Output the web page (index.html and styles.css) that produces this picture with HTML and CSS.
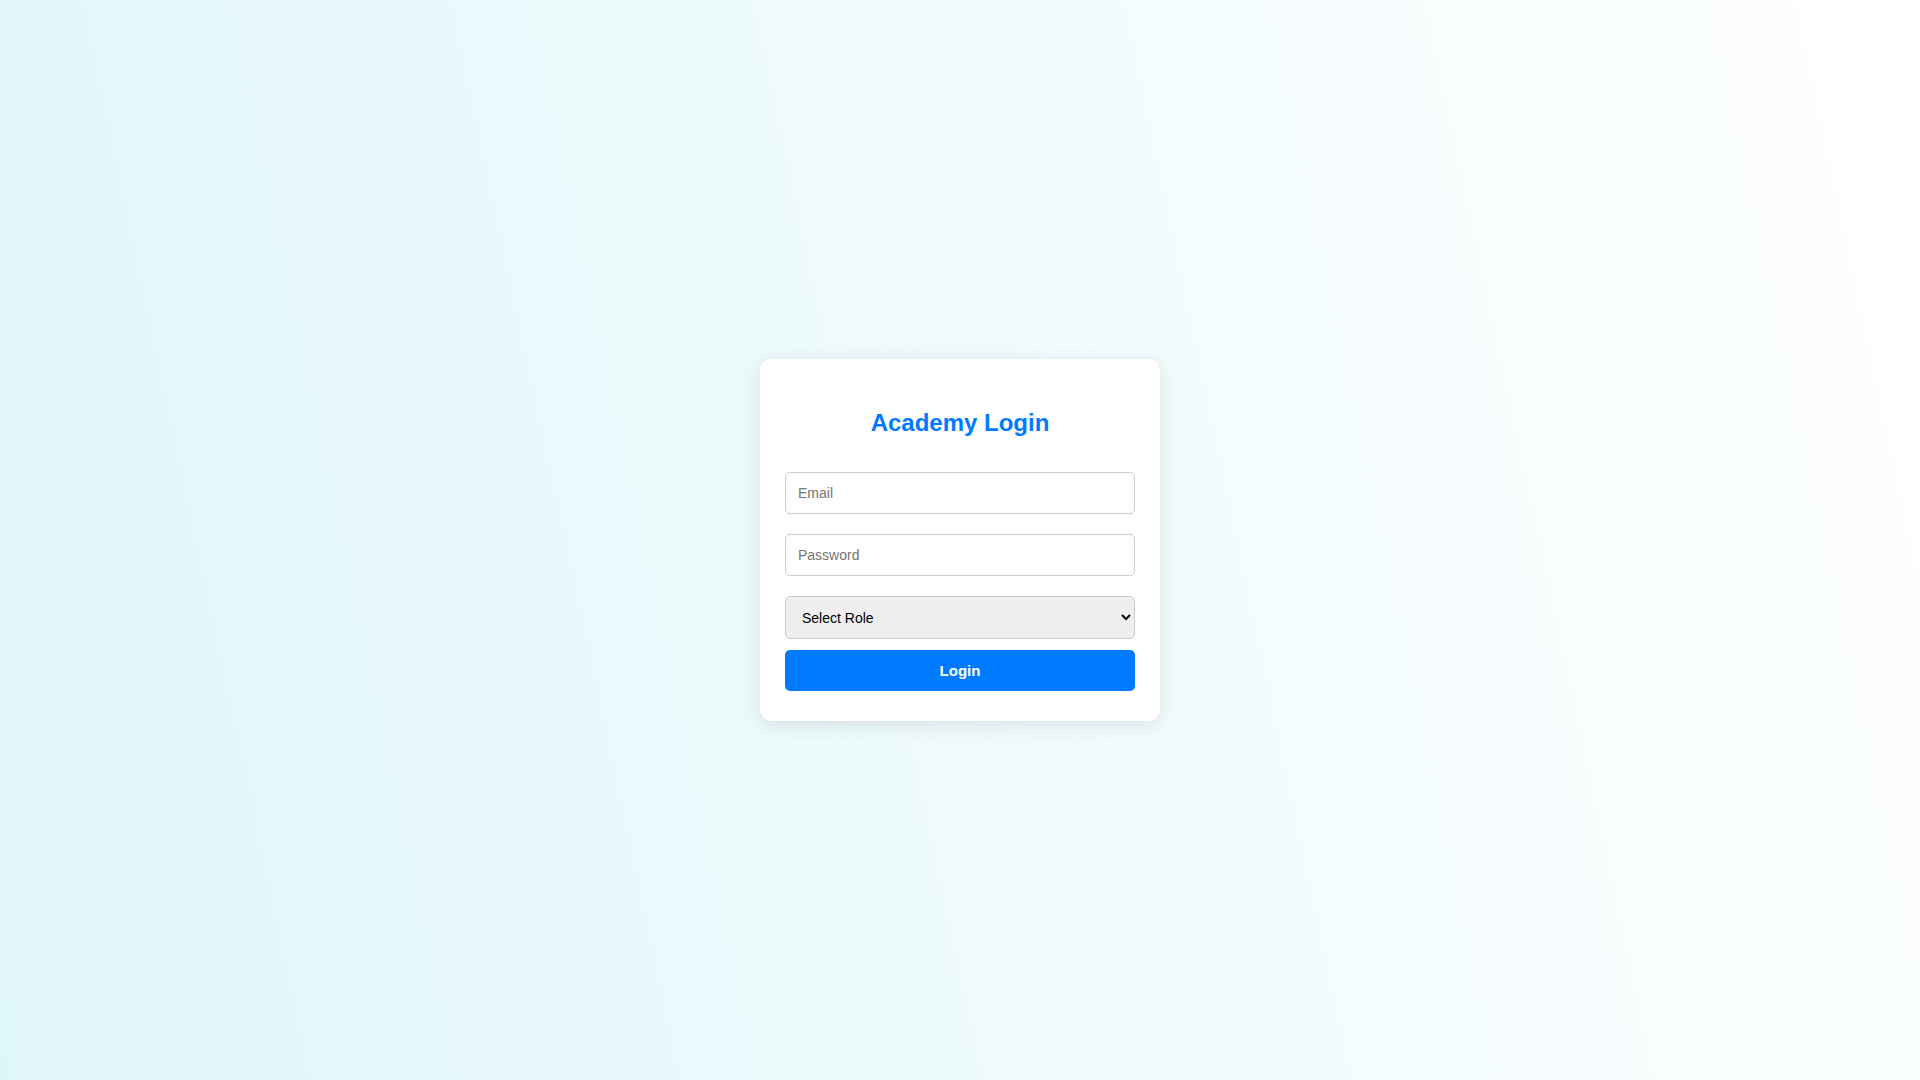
FILE: index.html
```html
<!DOCTYPE html>
<html lang="en">
<head>
<meta charset="utf-8">
<title>Academy Login</title>
<link rel="stylesheet" href="styles.css">
</head>
<body>
  <div class="card">
    <h2 class="title">Academy Login</h2>
    <form class="form">
      <input class="field" type="email" placeholder="Email">
      <input class="field" type="password" placeholder="Password">
      <select class="field select">
        <option>Select Role</option>
        <option>Student</option>
        <option>Teacher</option>
        <option>Admin</option>
      </select>
      <button class="btn" type="button">Login</button>
    </form>
  </div>
</body>
</html>
```
FILE: styles.css
```css
html, body {
  height: 100%;
}
body {
  margin: 0;
  display: flex;
  align-items: center;
  justify-content: center;
  background: linear-gradient(78deg, #dff6f9, #ffffff);
  font-family: "Liberation Sans", Arial, sans-serif;
}
.card {
  width: 350px;
  padding: 30px 25px;
  background: #ffffff;
  border-radius: 12px;
  box-shadow: 0 4px 20px rgba(0, 0, 0, 0.1);
}
.title {
  margin: 20px 0 35px;
  font-size: 24px;
  line-height: 28px;
  font-weight: bold;
  color: #007bff;
  text-align: center;
}
.form {
  display: flex;
  flex-direction: column;
}
.field {
  box-sizing: border-box;
  width: 100%;
  height: 42px;
  margin: 0 0 20px;
  padding: 12px;
  border: 1px solid #cccccc;
  border-radius: 5px;
  font-family: "Liberation Sans", Arial, sans-serif;
  font-size: 14px;
  color: #000;
  background: #ffffff;
}
.field::placeholder {
  color: #757575;
}
.select {
  height: 43px;
  margin-bottom: 11px;
  padding: 0 12px;
  background-color: #efefef;
}
.btn {
  height: 41px;
  padding: 0;
  border: none;
  border-radius: 5px;
  background: #007bff;
  color: #ffffff;
  font-family: "Liberation Sans", Arial, sans-serif;
  font-size: 15px;
  font-weight: bold;
  cursor: pointer;
}
```
